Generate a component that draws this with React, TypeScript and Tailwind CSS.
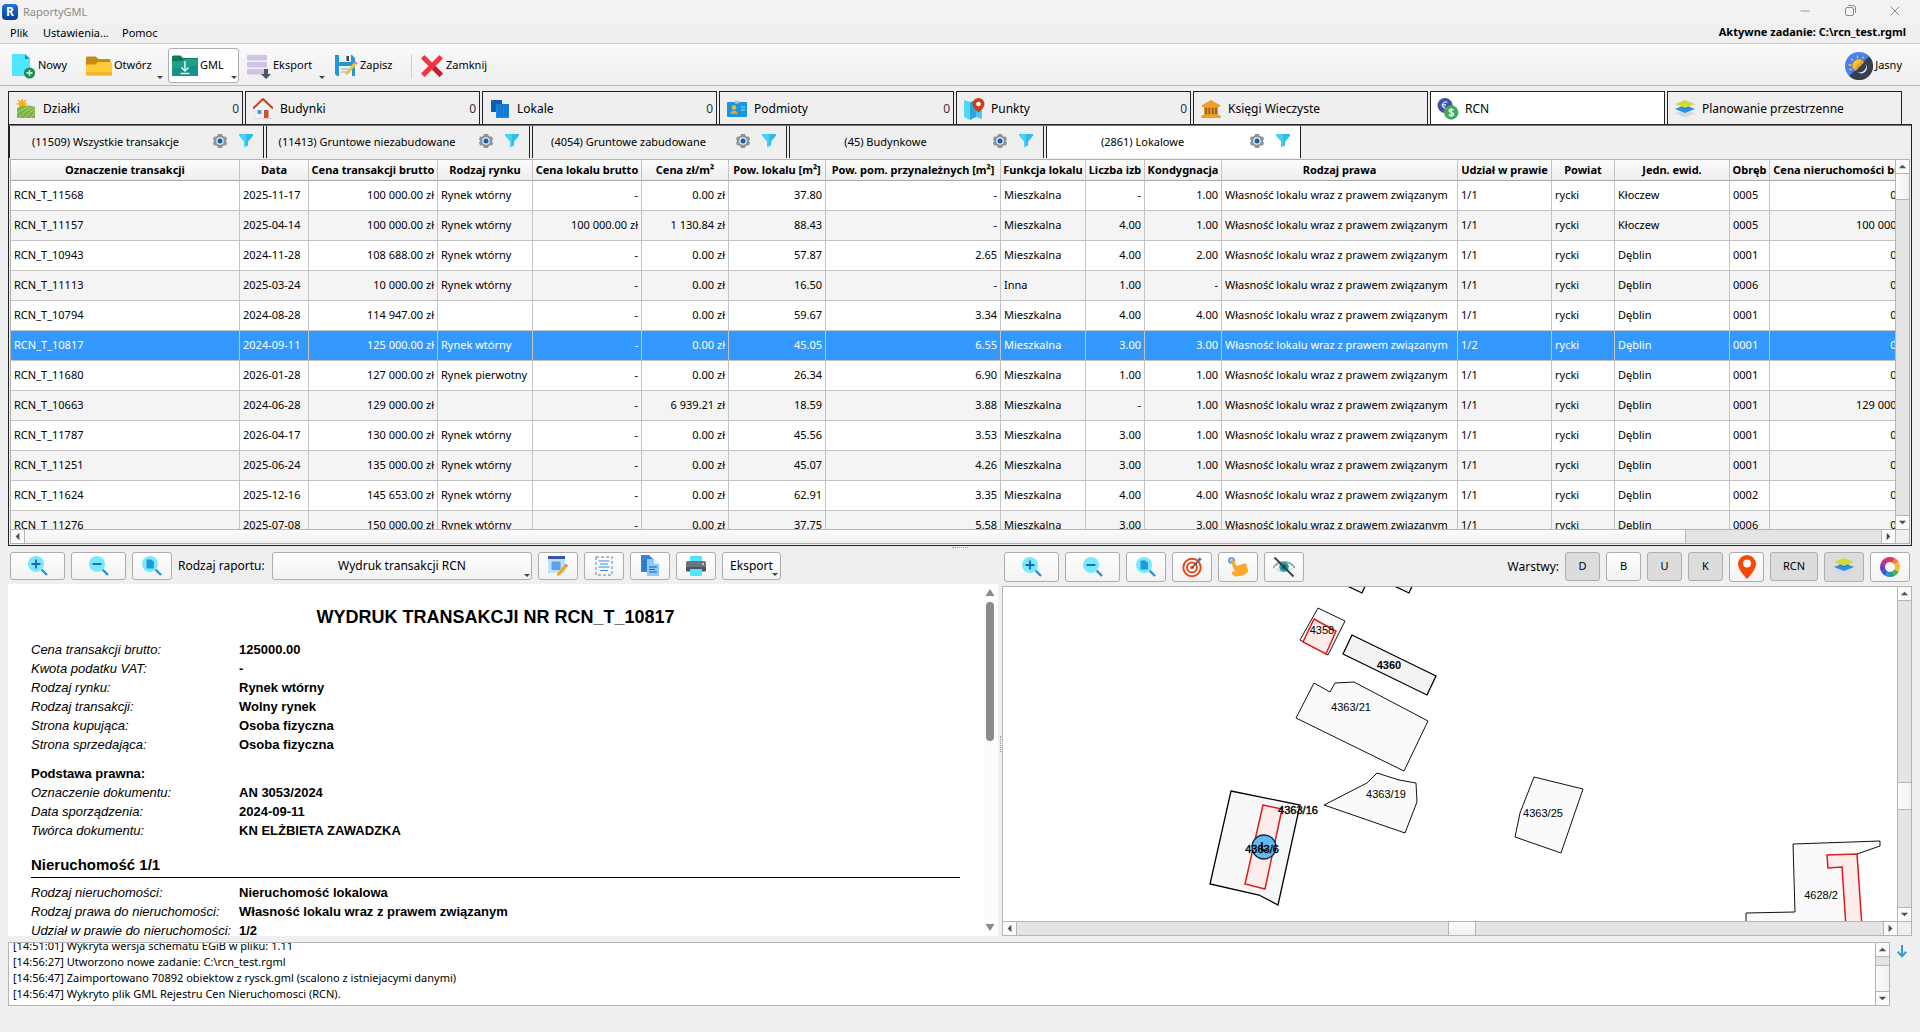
import React, { useState } from 'react'
import { Minus, X } from 'lucide-react'

type IconProps = { className?: string }

/* ---------- ikony paska narzędzi ---------- */

const AppLogo = () => (
  <span className="flex h-4 w-4 items-center justify-center rounded bg-linear-to-b from-[#1f6fe0] to-[#0a3fa0] text-[12px] leading-4 font-bold text-white">
    R
  </span>
)

const NewFileIcon = () => (
  <svg width="24" height="26" viewBox="0 0 24 26">
    <path d="M0 1h13l5 5v17H0z" fill="#50e6ff" />
    <path d="M13 1l5 5h-5z" fill="#1a8fd0" />
    <circle cx="17.500" cy="20" r="5.600" fill="#1a8f5a" />
    <path d="M17.500 17v6M14.500 20h6" stroke="#fff" strokeWidth="1.300" />
  </svg>
)

const FolderIcon = () => (
  <svg width="26" height="22" viewBox="0 0 26 22">
    <path d="M0 3a1.500 1.500 0 0 1 1.500-1.500h8l3 2.500h10.500a1.500 1.500 0 0 1 1.500 1.500V12H0z" fill="#c48a12" />
    <path d="M0 9.500h9l3-2.500h12.500a1.500 1.500 0 0 1 1.500 1.500V19a1.500 1.500 0 0 1-1.500 1.500h-23A1.500 1.500 0 0 1 0 19z" fill="#ffcb3d" />
    <path d="M0 19a1.500 1.500 0 0 0 1.500 1.500h23A1.500 1.500 0 0 0 26 19v-2H0z" fill="#f5b32a" />
  </svg>
)

const ImportFolderIcon = () => (
  <svg width="26" height="22" viewBox="0 0 26 22">
    <path d="M0 2a1.500 1.500 0 0 1 1.500-1.500h7l2.500 2.500H26v8H0z" fill="#0c7a52" />
    <path d="M0 6h10l2-2h14v15.500A1.500 1.500 0 0 1 24.500 21h-23A1.500 1.500 0 0 1 0 19.500z" fill="#1fa187" />
    <path d="M0 14l26-4v9.500a1.500 1.500 0 0 1-1.500 1.500h-23A1.500 1.500 0 0 1 0 19.500z" fill="#178f8a" />
    <path d="M13 6v10M9.500 12.500L13 16l3.500-3.500M8.500 18.500h9" stroke="#e9fff8" strokeWidth="1.400" fill="none" />
  </svg>
)

const ExportIcon = () => (
  <svg width="24" height="26" viewBox="0 0 24 26">
    <g fill="#cfc2e6">
      <rect x="0" y="2" width="20" height="5.500" rx="1" />
      <rect x="0" y="9" width="20" height="5.500" rx="1" />
      <rect x="0" y="16" width="17" height="5.500" rx="1" />
    </g>
    <path d="M17 16h4v5h3l-5 5-5-5h3z" fill="#4a5560" />
  </svg>
)

const SaveIcon = () => (
  <svg width="24" height="24" viewBox="0 0 24 24">
    <path d="M1 1h17l3 3v18H3l-2-2z" fill="#2196d8" />
    <rect x="5" y="1" width="12" height="7" fill="#eef3f6" />
    <rect x="12.500" y="2" width="2.500" height="5" fill="#37474f" />
    <rect x="5" y="12" width="13" height="10" fill="#f2f5f7" />
    <path d="M7 15h8M7 18h5" stroke="#90a4ae" />
    <path d="M12 18l8-9.500 2.500 2-8 9.500-3.200 1z" fill="#f2c438" />
    <path d="M20 8.500l1-1.200 2.500 2-1 1.200z" fill="#e0608a" />
  </svg>
)

const CloseIcon = () => (
  <svg width="24" height="24" viewBox="0 0 24 24">
    <path d="M4.500 1L12 8.500 19.500 1 23 4.500 15.500 12 23 19.500 19.500 23 12 15.500 4.500 23 1 19.500 8.500 12 1 4.500z" fill="#f0353f" />
    <path d="M12 15.500L19.500 23l3.500-3.500L15.500 12z" fill="#c9202f" />
  </svg>
)

const ThemeIcon = () => (
  <svg width="28" height="28" viewBox="0 0 28 28">
    <circle cx="14" cy="14" r="14" fill="#4a7ff0" />
    <path d="M24 4.200A14 14 0 1 1 4.200 24z" fill="#35404c" />
    <path d="M17.500 8.500a6.500 6.500 0 0 0-9 9z" fill="#ffc21a" />
    <path d="M8.500 17.500a6.500 6.500 0 0 0 2 1.500L19 10.500a6.500 6.500 0 0 0-1.500-2z" fill="#f29c1f" />
    <path d="M12.500 3.500v3M6 6.500l2 2M3.500 13h3M18.500 4.500l-1 2M4.500 18l2-1" stroke="#ffc21a" strokeWidth="1.400" />
    <path d="M20.500 12a5.500 5.500 0 1 1-8.500 7.500 6 6 0 0 0 8.500-7.500z" fill="#eef1f4" />
  </svg>
)

/* ---------- ikony zakładek ---------- */

const FieldIcon = () => (
  <svg width="20" height="20" viewBox="0 0 20 20">
    <path d="M6 0v2M.5 5H3M2 1l2 2M10 1L8 3M11.500 5H9" stroke="#ff9800" strokeWidth="1.200" />
    <circle cx="6" cy="5" r="3.300" fill="#ffb300" />
    <path d="M1 9c6-3 12-3 18-1v10a1 1 0 0 1-1 1H2a1 1 0 0 1-1-1z" fill="#7cb342" />
    <path d="M1 14c4-3 8-5 12-6.500M3 19c4-5 8-8 14-11M9 19c3-4 6-7 10-8.500M14 19l5-5" stroke="#aed581" fill="none" />
  </svg>
)

const HouseIcon = () => (
  <svg width="20" height="22" viewBox="0 0 20 22">
    <path d="M3 10l7-7 7 7v10H3z" fill="#f1f3f4" />
    <path d="M0 10.500L10 1l10 9.500" stroke="#c8431f" strokeWidth="2" fill="none" />
    <rect x="4.500" y="12" width="4" height="4" fill="#3ba3dd" />
    <rect x="11" y="12" width="4.500" height="8" fill="#d1502f" />
    <path d="M1 20.500h18" stroke="#d5d9dc" />
  </svg>
)

const UnitsIcon = () => (
  <svg width="20" height="20" viewBox="0 0 20 20">
    <path d="M1 1h11v12H1z" fill="#0f5fb0" />
    <path d="M6 5h13v14H6z" fill="#1a86e0" />
    <path d="M6 5h13v2H6z" fill="#1a78cf" />
    <path d="M9 7v10M12 7v10M15 7v10M17.500 7v10" stroke="#1267bd" />
  </svg>
)

const SubjectIcon = () => (
  <svg width="20" height="20" viewBox="0 0 20 20">
    <rect x="0" y="3" width="20" height="15" rx="1" fill="#1b96de" />
    <path d="M8 1.500h4v3H8z" fill="#b8c4cc" />
    <circle cx="7" cy="8.500" r="2.300" fill="#f4b53f" />
    <path d="M3.500 15a3.500 3.500 0 0 1 7 0z" fill="#f0a020" />
    <path d="M14 8h4M14 11h4" stroke="#8fe0ff" />
  </svg>
)

const MapPointIcon = () => (
  <svg width="22" height="22" viewBox="0 0 22 22">
    <path d="M1 2l6 2v18l-6-3z" fill="#50d8f5" />
    <path d="M7 4l6-2v17l-6 3z" fill="#2ba7dc" />
    <path d="M13 2l6 3v16l-6-2z" fill="#43cdf2" />
    <path d="M15.500 0a6 6 0 0 1 6 6c0 4-6 8.500-6 8.500S9.500 10 9.500 6a6 6 0 0 1 6-6z" fill="#c8401c" />
    <circle cx="15.500" cy="6" r="2.300" fill="#fff" />
  </svg>
)

const BankIcon = () => (
  <svg width="20" height="18" viewBox="0 0 20 18">
    <path d="M10 0l9 5v2H1V5z" fill="#eda02a" />
    <path d="M3 7h14v8H3z" fill="#e8951f" />
    <path d="M5 8v6M8.300 8v6M11.700 8v6M15 8v6" stroke="#7b5a2b" strokeWidth="1.400" />
    <path d="M1 15h18l1 3H0z" fill="#eda02a" />
  </svg>
)

const CoinsIcon = () => (
  <svg width="22" height="22" viewBox="0 0 22 22">
    <circle cx="8" cy="7.500" r="7.500" fill="#3f51a5" />
    <path d="M10.500 4.500a3.200 3.200 0 1 0 0 5.500M4.500 6.500h4.500M4.500 8h4.500" stroke="#cfd6ff" strokeWidth="1.200" fill="none" />
    <circle cx="14.200" cy="14.500" r="7.200" fill="#43a95c" />
    <path d="M16.600 12.300c-.500-1.200-4.500-1.500-4.600.400 0 2 4.800 1.200 4.700 3.400-.200 2-4.300 1.700-4.900.300M14.300 10v9" stroke="#fff" strokeWidth="1.300" fill="none" />
  </svg>
)

const LayersIcon = () => (
  <svg width="20" height="18" viewBox="0 0 20 18">
    <path d="M0 13.500l10-4 10 4-10 4z" fill="#cfdbe4" />
    <path d="M0 9l10-4 10 4-10 4z" fill="#2f8fe6" />
    <path d="M5 7l5-2 5 2-5 2z" fill="#1b74b8" />
    <path d="M0 4l10-4 10 4-10 4z" fill="#cddc39" />
  </svg>
)

const GearIcon = () => (
  <svg width="14" height="14" viewBox="0 0 14 14">
    <path
      d="M5 0h4l.6 1.800 1.600.9L13 2.400l1 3.100L12.700 7 14 8.500l-1 3.100-1.800-.300-1.600.9L9 14H5l-.600-1.800-1.600-.9-1.800.3-1-3.100L1.300 7 0 5.500l1-3.100 1.800.3 1.600-.9z"
      fill="#8b939b"
    />
    <circle cx="7" cy="7" r="3.800" fill="#e4edf4" />
    <circle cx="7" cy="7" r="2.500" fill="#1b5ea8" />
  </svg>
)

const FunnelIcon = () => (
  <svg width="14" height="14" viewBox="0 0 14 14">
    <path d="M0 0h14v1.500L9 7.500v3.500L5 13.500v-6L0 1.500z" fill="#45d0f5" />
    <path d="M7 0h7v1.500L9 7.500v3.500L7 12.500z" fill="#2cbdec" />
  </svg>
)

/* ---------- ikony podglądu i mapy ---------- */

const Magnifier = ({ children }: { children: React.ReactNode }) => (
  <svg width="20" height="20" viewBox="0 0 20 20">
    <path d="M13 13l6 6" stroke="#2b8fd9" strokeWidth="2.400" />
    <circle cx="8" cy="8" r="8" fill="#7ae9fc" />
    {children}
  </svg>
)

const ZoomInIcon = () => (
  <Magnifier>
    <path d="M8 3.500v9M3.500 8h9" stroke="#1666b5" strokeWidth="1.800" />
  </Magnifier>
)

const ZoomOutIcon = () => (
  <Magnifier>
    <path d="M3.500 8h9" stroke="#1666b5" strokeWidth="1.800" />
  </Magnifier>
)

const ZoomPageIcon = () => (
  <Magnifier>
    <path d="M4.500 3.500h5l2.500 2.500v6.500H4.500z" fill="#1f9bdc" />
  </Magnifier>
)

const EditFormIcon = () => (
  <svg width="20" height="20" viewBox="0 0 20 20">
    <rect x="0" y="1" width="17" height="16" fill="#bfe0fb" />
    <rect x="0" y="0" width="17" height="3" fill="#3c50b0" />
    <rect x="3.500" y="5.500" width="9" height="8.500" fill="#5ba2e8" />
    <path d="M9.500 17l7-8 2.500 2-7 8-3 1z" fill="#f7a11b" />
    <path d="M16.500 9l1-1.200 2.500 2-1 1.200z" fill="#d06a5a" />
  </svg>
)

const SelectTextIcon = () => (
  <svg width="18" height="20" viewBox="0 0 18 20">
    <rect x="1" y="1" width="16" height="18" fill="none" stroke="#9aa3ab" strokeWidth="1.400" strokeDasharray="3 2" />
    <path d="M3.500 5h11M5 8h8M3.500 11h11M5 14.500h8" stroke="#2f8fe6" strokeWidth="1.200" />
  </svg>
)

const CopyIcon = () => (
  <svg width="18" height="22" viewBox="0 0 18 22">
    <path d="M0 0h8l4 4v13H0z" fill="#2f86d8" />
    <path d="M6 4h7l5 5v12H6z" fill="#8fc9fb" />
    <path d="M13 4l5 5h-5z" fill="#e3f3ff" />
    <path d="M8 12h8M8 14.500h6M8 17h8M2 7h3M2 10h3M2 13h3" stroke="#1661b0" />
  </svg>
)

const PrinterIcon = () => (
  <svg width="20" height="20" viewBox="0 0 20 20">
    <rect x="4" y="0" width="12" height="6" rx="1" fill="#50e6ff" />
    <rect x="0" y="5" width="20" height="10" rx="1.500" fill="#6a757e" />
    <path d="M0 11h20v3a1.500 1.500 0 0 1-1.500 1.500h-17A1.500 1.500 0 0 1 0 14z" fill="#4b5660" />
    <circle cx="17" cy="8" r="1" fill="#dfe6ea" />
    <rect x="4" y="13" width="12" height="7" rx="1" fill="#50e6ff" />
  </svg>
)

const TargetIcon = () => (
  <svg width="20" height="20" viewBox="0 0 20 20">
    <g fill="none" stroke="#e8481e" strokeWidth="2">
      <circle cx="10" cy="10.500" r="8.700" fill="#fff" />
      <circle cx="10" cy="10.500" r="5" />
    </g>
    <circle cx="10" cy="10.500" r="1.800" fill="#e8481e" />
    <path d="M10 10.500L16 4.500" stroke="#37474f" strokeWidth="1.400" />
    <path d="M15 3l3-3 .500 1.500L20 2l-3 3-2 .500z" fill="#3f7fb0" />
  </svg>
)

const TouchIcon = () => (
  <svg width="20" height="20" viewBox="0 0 20 20">
    <circle cx="3.500" cy="3.500" r="3.300" fill="#4a94dc" />
    <circle cx="3.500" cy="3.500" r="1.700" fill="#cfe6fa" />
    <path d="M3 3.500c.8-.8 2-.500 2.700.500l3.300 5 7-2.500c1.500-.500 2.300.500 2.700 2l1.300 5c.2 1-.2 2-1 2.500l-4 2.500-6 1c-1.500.2-3-.300-4-1.500l-1.500-2c.500-1.500 2-2 3.500-1.500L3 5.500c-.3-.700-.400-1.500 0-2z" fill="#fba92c" />
  </svg>
)

const HiddenIcon = () => (
  <svg width="22" height="20" viewBox="0 0 22 20">
    <path d="M0 11C5 3 17 3 22 11" stroke="#9aa9b8" strokeWidth="1.800" fill="none" />
    <path d="M3 11.500c5 4.500 11 4.500 16 0" stroke="#cfd8e0" strokeWidth="1.300" fill="none" />
    <circle cx="11" cy="10" r="4.800" fill="#13a0a8" />
    <circle cx="11" cy="10" r="2" fill="#0b3f48" />
    <path d="M1.500.500L20.500 19.500" stroke="#37424e" strokeWidth="2" />
  </svg>
)

const PinIcon = () => (
  <svg width="18" height="24" viewBox="0 0 18 24">
    <path d="M9 0a9 9 0 0 1 9 9c0 6-9 15-9 15S0 15 0 9a9 9 0 0 1 9-9z" fill="#fd4605" />
    <circle cx="9" cy="8.500" r="4" fill="#fff" />
  </svg>
)

const wheel = ['#e53950', '#f5793b', '#fbb829', '#f2c12e', '#4caf50', '#27a08c', '#2196d8', '#3556c8', '#5b3fc0', '#8e35b8', '#c02f8a', '#d83560']

const ColorWheelIcon = () => (
  <svg width="20" height="20" viewBox="-10 -10 20 20">
    {wheel.map((color, i) => (
      <path key={color} d="M0-7.500A7.500 7.500 0 0 1 3.750-6.500" transform={`rotate(${i * 30})`} stroke={color} strokeWidth="5" fill="none" />
    ))}
  </svg>
)

/* ---------- wspólne elementy ---------- */

const MenuArrow = ({ className = '' }: IconProps) => (
  <svg width="6" height="3" viewBox="0 0 6 3" className={`pointer-events-none absolute ${className}`}>
    <path d="M0 0h6L3 3z" fill="#444" />
  </svg>
)

const arrowPaths = {
  up: 'M3 9h8L7 5z',
  down: 'M3 5h8L7 9z',
  left: 'M9 3v8L5 7z',
  right: 'M5 3v8l4-4z'
}

const ScrollButton = ({ dir, label }: { dir: keyof typeof arrowPaths; label: string }) => (
  <button type="button" aria-label={label} className="flex h-[13px] w-[13px] shrink-0 items-center justify-center bg-[#fafafa]">
    <svg width="13" height="13" viewBox="0 0 14 14">
      <path d={arrowPaths[dir]} fill="#505050" />
    </svg>
  </button>
)

interface ScrollProps {
  before?: string
  thumb: string
  after?: string
}

const VScroll = ({ before = '', thumb, after = '' }: ScrollProps) => (
  <div className="flex w-[14px] shrink-0 flex-col border-l border-[#b5b5b5] bg-[#e4e4e4]">
    <ScrollButton dir="up" label="Przewiń w górę" />
    <div className="flex min-h-0 flex-1 flex-col border-y border-[#b5b5b5]">
      <div className={before} />
      <div className={`shrink-0 border-[#b5b5b5] bg-linear-to-r from-[#fcfcfc] to-[#f0f0f0] ${thumb}`} />
      <div className={after} />
    </div>
    <ScrollButton dir="down" label="Przewiń w dół" />
  </div>
)

const HScroll = ({ before = '', thumb, after = '' }: ScrollProps) => (
  <div className="flex h-[14px] shrink-0 border-t border-[#b5b5b5] bg-[#e4e4e4]">
    <ScrollButton dir="left" label="Przewiń w lewo" />
    <div className="flex min-w-0 flex-1 border-x border-[#b5b5b5]">
      <div className={before} />
      <div className={`shrink-0 border-[#b5b5b5] bg-linear-to-b from-[#fcfcfc] to-[#f0f0f0] ${thumb}`} />
      <div className={after} />
    </div>
    <ScrollButton dir="right" label="Przewiń w prawo" />
    <div className="w-[14px] shrink-0 border-l border-[#b5b5b5] bg-[#efefef]" />
  </div>
)

interface PushButtonProps {
  label: string
  size: string
  pressed?: boolean
  children: React.ReactNode
}

const PushButton = ({ label, size, pressed, children }: PushButtonProps) => (
  <button
    type="button"
    aria-label={label}
    title={label}
    aria-pressed={pressed}
    className={`relative flex shrink-0 items-center justify-center rounded-[3px] border border-[#adadad] ${size} ${
      pressed ? 'bg-[#dcdcdc]' : 'bg-linear-to-b from-white to-[#f2f2f2]'
    }`}
  >
    {children}
  </button>
)

/* ---------- dane ---------- */

const mainTabs = [
  { label: 'Działki', count: '0', icon: <FieldIcon /> },
  { label: 'Budynki', count: '0', icon: <HouseIcon /> },
  { label: 'Lokale', count: '0', icon: <UnitsIcon /> },
  { label: 'Podmioty', count: '0', icon: <SubjectIcon /> },
  { label: 'Punkty', count: '0', icon: <MapPointIcon /> },
  { label: 'Księgi Wieczyste', icon: <BankIcon /> },
  { label: 'RCN', icon: <CoinsIcon /> },
  { label: 'Planowanie przestrzenne', icon: <LayersIcon /> }
]

const subTabs = [
  { label: '(11509) Wszystkie transakcje', width: 'w-[255px]' },
  { label: '(11413) Gruntowe niezabudowane', width: 'w-[264px]' },
  { label: '(4054) Gruntowe zabudowane', width: 'w-[255px]' },
  { label: '(45) Budynkowe', width: 'w-[255px]' },
  { label: '(2861) Lokalowe', width: 'w-[255px]' }
]

const columns = [
  { title: 'Oznaczenie transakcji', width: 'w-[229px]' },
  { title: 'Data', width: 'w-[69px]' },
  { title: 'Cena transakcji brutto', width: 'w-[129px]', right: true },
  { title: 'Rodzaj rynku', width: 'w-[95px]' },
  { title: 'Cena lokalu brutto', width: 'w-[109px]', right: true },
  { title: 'Cena zł/m²', width: 'w-[87px]', right: true },
  { title: 'Pow. lokalu [m²]', width: 'w-[97px]', right: true },
  { title: 'Pow. pom. przynależnych [m²]', width: 'w-[175px]', right: true },
  { title: 'Funkcja lokalu', width: 'w-[85px]' },
  { title: 'Liczba izb', width: 'w-[59px]', right: true },
  { title: 'Kondygnacja', width: 'w-[77px]', right: true },
  { title: 'Rodzaj prawa', width: 'w-[236px]' },
  { title: 'Udział w prawie', width: 'w-[94px]' },
  { title: 'Powiat', width: 'w-[63px]' },
  { title: 'Jedn. ewid.', width: 'w-[115px]' },
  { title: 'Obręb', width: 'w-[40px]' },
  { title: 'Cena nieruchomości brutto', width: 'w-[157px]', right: true }
]

const prawo = 'Własność lokalu wraz z prawem związanym'

const rows = [
  ['RCN_T_11568', '2025-11-17', '100 000.00 zł', 'Rynek wtórny', '-', '0.00 zł', '37.80', '-', 'Mieszkalna', '-', '1.00', prawo, '1/1', 'rycki', 'Kłoczew', '0005', '0.00 zł'],
  ['RCN_T_11157', '2025-04-14', '100 000.00 zł', 'Rynek wtórny', '100 000.00 zł', '1 130.84 zł', '88.43', '-', 'Mieszkalna', '4.00', '1.00', prawo, '1/1', 'rycki', 'Kłoczew', '0005', '100 000.00 zł'],
  ['RCN_T_10943', '2024-11-28', '108 688.00 zł', 'Rynek wtórny', '-', '0.00 zł', '57.87', '2.65', 'Mieszkalna', '4.00', '2.00', prawo, '1/1', 'rycki', 'Dęblin', '0001', '0.00 zł'],
  ['RCN_T_11113', '2025-03-24', '10 000.00 zł', 'Rynek wtórny', '-', '0.00 zł', '16.50', '-', 'Inna', '1.00', '-', prawo, '1/1', 'rycki', 'Dęblin', '0006', '0.00 zł'],
  ['RCN_T_10794', '2024-08-28', '114 947.00 zł', '', '-', '0.00 zł', '59.67', '3.34', 'Mieszkalna', '4.00', '4.00', prawo, '1/1', 'rycki', 'Dęblin', '0001', '0.00 zł'],
  ['RCN_T_10817', '2024-09-11', '125 000.00 zł', 'Rynek wtórny', '-', '0.00 zł', '45.05', '6.55', 'Mieszkalna', '3.00', '3.00', prawo, '1/2', 'rycki', 'Dęblin', '0001', '0.00 zł'],
  ['RCN_T_11680', '2026-01-28', '127 000.00 zł', 'Rynek pierwotny', '-', '0.00 zł', '26.34', '6.90', 'Mieszkalna', '1.00', '1.00', prawo, '1/1', 'rycki', 'Dęblin', '0001', '0.00 zł'],
  ['RCN_T_10663', '2024-06-28', '129 000.00 zł', '', '-', '6 939.21 zł', '18.59', '3.88', 'Mieszkalna', '-', '1.00', prawo, '1/1', 'rycki', 'Dęblin', '0001', '129 000.00 zł'],
  ['RCN_T_11787', '2026-04-17', '130 000.00 zł', 'Rynek wtórny', '-', '0.00 zł', '45.56', '3.53', 'Mieszkalna', '3.00', '1.00', prawo, '1/1', 'rycki', 'Dęblin', '0001', '0.00 zł'],
  ['RCN_T_11251', '2025-06-24', '135 000.00 zł', 'Rynek wtórny', '-', '0.00 zł', '45.07', '4.26', 'Mieszkalna', '3.00', '1.00', prawo, '1/1', 'rycki', 'Dęblin', '0001', '0.00 zł'],
  ['RCN_T_11624', '2025-12-16', '145 653.00 zł', 'Rynek wtórny', '-', '0.00 zł', '62.91', '3.35', 'Mieszkalna', '4.00', '4.00', prawo, '1/1', 'rycki', 'Dęblin', '0002', '0.00 zł'],
  ['RCN_T_11276', '2025-07-08', '150 000.00 zł', 'Rynek wtórny', '-', '0.00 zł', '37.75', '5.58', 'Mieszkalna', '3.00', '3.00', prawo, '1/1', 'rycki', 'Dęblin', '0006', '0.00 zł']
]

const transactionInfo = [
  ['Cena transakcji brutto:', '125000.00'],
  ['Kwota podatku VAT:', '-'],
  ['Rodzaj rynku:', 'Rynek wtórny'],
  ['Rodzaj transakcji:', 'Wolny rynek'],
  ['Strona kupująca:', 'Osoba fizyczna'],
  ['Strona sprzedająca:', 'Osoba fizyczna']
]

const legalInfo = [
  ['Oznaczenie dokumentu:', 'AN 3053/2024'],
  ['Data sporządzenia:', '2024-09-11'],
  ['Twórca dokumentu:', 'KN ELŻBIETA ZAWADZKA']
]

const propertyInfo = [
  ['Rodzaj nieruchomości:', 'Nieruchomość lokalowa'],
  ['Rodzaj prawa do nieruchomości:', prawo],
  ['Udział w prawie do nieruchomości:', '1/2']
]

const logLines = [
  '[14:51:01] Wykryta wersja schematu EGiB w pliku: 1.11',
  '[14:56:27] Utworzono nowe zadanie: C:\\rcn_test.rgml',
  '[14:56:47] Zaimportowano 70892 obiektow z rysck.gml (scalono z istniejacymi danymi)',
  '[14:56:47] Wykryto plik GML Rejestru Cen Nieruchomosci (RCN).'
]

/* ---------- sekcje okna ---------- */

const TitleBar = () => (
  <header className="flex h-6 shrink-0 items-center bg-[#f3f3f3] pl-[2px]">
    <AppLogo />
    <span className="ml-[5px] text-[11px] text-[#8a8a8a]">RaportyGML</span>
    <div className="ml-auto flex items-center gap-[29px] pr-[17px] pb-[3px] text-[#8a8a8a]">
      <button type="button" aria-label="Minimalizuj" className="flex h-4 w-4 items-center justify-center">
        <Minus size={14} strokeWidth={1.500} />
      </button>
      <button type="button" aria-label="Przywróć" className="flex h-4 w-4 items-center justify-center">
        <svg width="11" height="11" viewBox="0 0 11 11" fill="none" stroke="#8a8a8a">
          <rect x="0.500" y="2.500" width="8" height="8" rx="1.500" />
          <path d="M3 .5h5a2.500 2.500 0 0 1 2.500 2.500v5" />
        </svg>
      </button>
      <button type="button" aria-label="Zamknij okno" className="flex h-4 w-4 items-center justify-center">
        <X size={16} strokeWidth={1.500} />
      </button>
    </div>
  </header>
)

const MenuBar = () => (
  <nav className="flex h-5 shrink-0 items-center border-b border-[#cfcfcf] pr-[14px] pl-[10px] text-[11px]">
    <button type="button" className="w-[33px] text-left">Plik</button>
    <button type="button" className="w-[79px] text-left">Ustawienia...</button>
    <button type="button" className="text-left">Pomoc</button>
    <span className="ml-auto pb-[2px] font-bold">Aktywne zadanie: C:\rcn_test.rgml</span>
  </nav>
)

const toolButton = 'relative flex h-[35px] items-center gap-[2px] rounded-[3px] border px-[3px] text-[11px]'

const Toolbar = () => (
  <div className="flex h-[42px] shrink-0 items-center border-b border-[#b9b9b9] bg-linear-to-b from-[#fafafa] to-[#efefef] pt-[2px] pr-[18px] pl-2">
    <button type="button" className={`${toolButton} w-[74px] border-transparent`}>
      <NewFileIcon />
      Nowy
    </button>
    <button type="button" className={`${toolButton} w-[86px] border-transparent`}>
      <FolderIcon />
      Otwórz
      <MenuArrow className="right-1 bottom-[3px]" />
    </button>
    <button type="button" className={`${toolButton} mr-1 w-[71px] border-[#adadad] bg-white`}>
      <ImportFolderIcon />
      GML
      <MenuArrow className="right-[1px] bottom-[3px]" />
    </button>
    <button type="button" className={`${toolButton} w-[87px] border-transparent`}>
      <ExportIcon />
      Eksport
      <MenuArrow className="right-1 bottom-[3px]" />
    </button>
    <button type="button" className={`${toolButton} w-[77px] border-transparent`}>
      <SaveIcon />
      Zapisz
    </button>
    <div className="mx-1 h-6 w-px bg-[#cfcfcf]" />
    <button type="button" className={`${toolButton} w-[80px] border-transparent`}>
      <CloseIcon />
      Zamknij
    </button>
    <button type="button" className="ml-auto flex items-center gap-[2px] text-[11px]">
      <ThemeIcon />
      Jasny
    </button>
  </div>
)

const MainTabs = ({ active, onSelect }: { active: string; onSelect: (tab: string) => void }) => (
  <div role="tablist" className="flex shrink-0 gap-[2px]">
    {mainTabs.map(tab => (
      <button
        key={tab.label}
        type="button"
        role="tab"
        aria-selected={tab.label === active}
        onClick={() => onSelect(tab.label)}
        className={`flex h-[33px] w-[235px] items-center border border-b-0 border-[#222] pt-[2px] pr-[3px] pl-[6px] text-[12px] ${
          tab.label === active ? 'bg-white' : ''
        }`}
      >
        <span className="flex w-[22px] justify-center">{tab.icon}</span>
        <span className="ml-[6px]">{tab.label}</span>
        <span className="ml-auto text-[#333]">{tab.count}</span>
      </button>
    ))}
  </div>
)

const SubTabs = ({ active, onSelect }: { active: string; onSelect: (tab: string) => void }) => (
  <div role="tablist" className="flex h-[34px] shrink-0 gap-[2px] border-t border-[#777]">
    {subTabs.map(tab => (
      <div
        key={tab.label}
        className={`flex h-8 shrink-0 items-center border-x border-[#222] pr-[10px] ${tab.width} ${
          tab.label === active ? 'bg-white' : ''
        }`}
      >
        <button
          type="button"
          role="tab"
          aria-selected={tab.label === active}
          onClick={() => onSelect(tab.label)}
          className="h-full flex-1 pt-px pr-3 text-[11px]"
        >
          {tab.label}
        </button>
        <button type="button" aria-label={`Ustawienia: ${tab.label}`} className="mr-3 pb-[2px]">
          <GearIcon />
        </button>
        <button type="button" aria-label={`Filtr: ${tab.label}`} className="pb-[2px]">
          <FunnelIcon />
        </button>
      </div>
    ))}
  </div>
)

const TransactionsTable = ({ selected, onSelect }: { selected: string; onSelect: (id: string) => void }) => (
  <div className="mx-[1px] mb-[1px] flex min-h-0 flex-1 flex-col border border-[#b0b0b0] bg-[#efefef]">
    <div className="flex min-h-0 flex-1">
      <div className="min-w-0 flex-1 overflow-hidden bg-white">
        <table className="w-[1916px] table-fixed border-separate border-spacing-0 text-[11px]">
          <thead>
            <tr className="h-[21px] bg-linear-to-b from-[#fdfdfd] to-[#ececec]">
              {columns.map(col => (
                <th
                  key={col.title}
                  scope="col"
                  className={`border-r border-b border-r-[#c4c4c4] border-b-[#a8a8a8] p-0 text-center leading-5 font-bold whitespace-nowrap ${col.width}`}
                >
                  {col.title}
                </th>
              ))}
            </tr>
          </thead>
          <tbody>
            {rows.map((row, i) => {
              const isSelected = row[0] === selected
              return (
                <tr
                  key={row[0]}
                  onClick={() => onSelect(row[0])}
                  className={`h-[30px] ${isSelected ? 'bg-[#3399ff] text-white' : i % 2 ? 'bg-[#f4f4f4]' : 'bg-white'}`}
                >
                  {row.map((value, j) => (
                    <td
                      key={columns[j].title}
                      className={`border-r border-b border-[#c4c4c4] px-[3px] pt-0 pb-px whitespace-nowrap ${
                        columns[j].right ? 'text-right' : 'text-left'
                      }`}
                    >
                      {value}
                    </td>
                  ))}
                </tr>
              )
            })}
          </tbody>
        </table>
      </div>
      <VScroll thumb="h-[26px] border-b" />
    </div>
    <HScroll thumb="w-[89.5%] border-r" />
  </div>
)

const ReportRows = ({ items }: { items: string[][] }) => (
  <dl className="grid grid-cols-[207px_1fr] leading-[19px]">
    {items.map(([name, value]) => (
      <React.Fragment key={name}>
        <dt className="whitespace-nowrap italic">{name}</dt>
        <dd className="pl-[1px] font-bold">{value}</dd>
      </React.Fragment>
    ))}
  </dl>
)

const ReportPane = () => (
  <section className="flex min-w-0 flex-[990] flex-col">
    <div className="flex h-8 shrink-0 items-start gap-[6px] pl-[2px] text-[12px]">
      <PushButton label="Powiększ" size="h-7 w-[55px]"><ZoomInIcon /></PushButton>
      <PushButton label="Pomniejsz" size="h-7 w-[55px]"><ZoomOutIcon /></PushButton>
      <PushButton label="Dopasuj stronę" size="h-7 w-[40px]"><ZoomPageIcon /></PushButton>
      <label htmlFor="report-type" className="flex h-7 w-[88px] items-center whitespace-nowrap">Rodzaj raportu:</label>
      <div className="relative">
        <select
          id="report-type"
          className="h-7 w-[260px] appearance-none rounded-[3px] border border-[#adadad] bg-linear-to-b from-white to-[#f2f2f2] text-center"
        >
          <option>Wydruk transakcji RCN</option>
        </select>
        <MenuArrow className="right-[2px] bottom-[3px]" />
      </div>
      <PushButton label="Edytuj szablon" size="h-7 w-[40px]"><EditFormIcon /></PushButton>
      <PushButton label="Zaznacz wszystko" size="h-7 w-[40px]"><SelectTextIcon /></PushButton>
      <PushButton label="Kopiuj" size="h-7 w-[40px]"><CopyIcon /></PushButton>
      <PushButton label="Drukuj" size="h-7 w-[40px]"><PrinterIcon /></PushButton>
      <PushButton label="Eksport" size="h-7 w-[59px]">
        Eksport
        <MenuArrow className="right-[2px] bottom-[3px]" />
      </PushButton>
    </div>
    <div className="flex min-h-0 flex-1 bg-white">
      <article className="min-w-0 flex-1 overflow-hidden px-[23px] pt-5 font-['Liberation_Sans',Arial,sans-serif] text-[13px]">
        <h1 className="mb-[10px] text-center text-[18px] leading-[26px] font-bold">WYDRUK TRANSAKCJI NR RCN_T_10817</h1>
        <ReportRows items={transactionInfo} />
        <h2 className="mt-[10px] leading-[19px] font-bold">Podstawa prawna:</h2>
        <ReportRows items={legalInfo} />
        <h2 className="mt-[14px] mb-[5px] border-b border-black pb-[2px] text-[15px] leading-[21px] font-bold">Nieruchomość 1/1</h2>
        <ReportRows items={propertyInfo} />
      </article>
      <div className="flex w-[15px] shrink-0 flex-col items-center bg-[#fcfcfc] py-[5px] pr-px">
        <svg width="10" height="8" viewBox="0 0 10 8">
          <path d="M5 0l4.500 7H.5z" fill="#8b8b8b" />
        </svg>
        <div className="my-[5px] flex min-h-0 flex-1 flex-col">
          <div className="h-[44%] w-2 rounded-full bg-[#8b8b8b]" />
        </div>
        <svg width="10" height="8" viewBox="0 0 10 8">
          <path d="M5 8L.5 1h9z" fill="#8b8b8b" />
        </svg>
      </div>
    </div>
  </section>
)

const MapCanvas = () => (
  <svg width="100%" height="100%" className="block bg-white font-['Liberation_Sans',Arial,sans-serif] text-[11px]">
    <g fill="#f3f3f3" stroke="#000" strokeWidth="1.300">
      <path d="M340-3L359 6l4-9zM387-3l19 9 4-9z" />
      <path d="M349 48l84 41-9 19-84-41z" />
    </g>
    <g fill="#fafafa" stroke="#111" strokeWidth="1">
      <path d="M315 21l27 13-17 34-28-15z" />
      <path d="M311 96l16 9 5-9 19-1 74 39-24 50-108-53z" />
      <path d="M321 218l43-22 10-10 22 7 17 3 1 19-12 31z" />
      <path d="M531 190l49 12-22 64-46-16 5-24z" />
      <path d="M743 340v-14l49-1-2-68 87-3v5l-23 8 4 73z" />
    </g>
    <path d="M228 204l69 14-22 100-19-10-49-11z" fill="#f7f7f7" stroke="#000" strokeWidth="1.300" />
    <g fill="#fdecec" stroke="#e01b1b" strokeWidth="1.500">
      <path d="M311 32l22 12-10 23-23-12z" />
      <path d="M260 218l19 4-17 80-20-5z" />
      <path d="M824 268l30-1 5 73h-16l-4-60-14 1z" />
    </g>
    <circle cx="261" cy="260" r="12" fill="#62b8f5" stroke="#10222e" strokeWidth="1.300" />
    <g textAnchor="middle">
      <text x="319" y="47">4358</text>
      <text x="386" y="82" fontWeight="bold">4360</text>
      <text x="348" y="124">4363/21</text>
      <text x="383" y="211">4363/19</text>
      <text x="540" y="230">4363/25</text>
      <text x="295" y="227" stroke="#000" strokeWidth="0.400">4363/16</text>
      <text x="261" y="264" fontSize="12" fontWeight="bold">L</text>
      <text x="259" y="266" stroke="#000" strokeWidth="0.400">4363/6</text>
      <text x="818" y="312">4628/2</text>
    </g>
  </svg>
)

const MapPane = () => {
  const [layers, setLayers] = useState({ D: true, B: false, U: true, K: true })

  return (
    <section className="flex min-w-0 flex-[910] flex-col">
      <div className="flex h-[34px] shrink-0 items-start gap-[6px] pr-[2px] pl-[2px] text-[12px]">
        <PushButton label="Powiększ mapę" size="h-[30px] w-[55px]"><ZoomInIcon /></PushButton>
        <PushButton label="Pomniejsz mapę" size="h-[30px] w-[55px]"><ZoomOutIcon /></PushButton>
        <PushButton label="Cały zakres" size="h-[30px] w-[40px]"><ZoomPageIcon /></PushButton>
        <PushButton label="Centruj" size="h-[30px] w-[40px]"><TargetIcon /></PushButton>
        <PushButton label="Wskaż obiekt" size="h-[30px] w-[40px]"><TouchIcon /></PushButton>
        <PushButton label="Ukryj" size="h-[30px] w-[40px]"><HiddenIcon /></PushButton>
        <span className="ml-auto flex h-[30px] items-center">Warstwy:</span>
        {(Object.keys(layers) as (keyof typeof layers)[]).map(key => (
          <button
            key={key}
            type="button"
            aria-pressed={layers[key]}
            onClick={() => setLayers(prev => ({ ...prev, [key]: !prev[key] }))}
            className={`h-[29px] w-[35px] shrink-0 rounded-[3px] border border-[#adadad] text-[11px] ${
              layers[key] ? 'bg-[#dcdcdc]' : 'bg-linear-to-b from-white to-[#f2f2f2]'
            }`}
          >
            {key}
          </button>
        ))}
        <PushButton label="Punkty adresowe" size="h-[30px] w-[35px]"><PinIcon /></PushButton>
        <PushButton label="RCN" size="h-[29px] w-[48px] text-[11px]" pressed>RCN</PushButton>
        <PushButton label="Podkład" size="h-[30px] w-[40px]" pressed><LayersIcon /></PushButton>
        <PushButton label="Kolory" size="h-[30px] w-[40px]"><ColorWheelIcon /></PushButton>
      </div>
      <div className="flex min-h-0 flex-1 flex-col border border-[#b5b5b5]">
        <div className="flex min-h-0 flex-1">
          <div className="min-w-0 flex-1 overflow-hidden">
            <MapCanvas />
          </div>
          <VScroll before="flex-[181]" thumb="h-7 border-y" after="flex-[97]" />
        </div>
        <HScroll before="flex-[430]" thumb="w-7 border-x" after="flex-[407]" />
      </div>
    </section>
  )
}

const LogPanel = () => (
  <footer className="mt-[6px] mb-[26px] flex h-16 shrink-0 pr-3 pl-2">
    <div className="flex min-w-0 flex-1 border border-[#b5b5b5] bg-white">
      <div role="log" className="flex min-w-0 flex-1 flex-col justify-end overflow-hidden pb-[3px] pl-1 text-[11px] leading-4">
        {logLines.map(line => (
          <p key={line} className="shrink-0">{line}</p>
        ))}
      </div>
      <VScroll before="flex-1" thumb="h-[26px] border-t" />
    </div>
    <button type="button" aria-label="Przewiń na koniec" className="flex w-[17px] items-start justify-end pt-[3px]">
      <svg width="10" height="13" viewBox="0 0 10 13">
        <path d="M5 0v11M.800 6.800L5 11.200l4.200-4.400" stroke="#2b9fd9" strokeWidth="2" fill="none" />
      </svg>
    </button>
    <div className="w-px" />
  </footer>
)

export const App: React.FC = () => {
  const [mainTab, setMainTab] = useState('RCN')
  const [subTab, setSubTab] = useState('(2861) Lokalowe')
  const [selected, setSelected] = useState('RCN_T_10817')

  return (
    <div className="flex h-screen flex-col overflow-hidden bg-[#efefef] font-['Noto_Sans','Segoe_UI',sans-serif] text-black">
      <TitleBar />
      <MenuBar />
      <Toolbar />

      <main className="flex min-h-0 flex-1 flex-col px-2 pt-[5px]">
        <MainTabs active={mainTab} onSelect={setMainTab} />
        <div className="flex min-h-0 flex-[420] flex-col border border-[#222]">
          <SubTabs active={subTab} onSelect={setSubTab} />
          <TransactionsTable selected={selected} onSelect={setSelected} />
        </div>
        <div className="flex h-[6px] shrink-0 justify-center">
          <div className="mt-px h-px w-4 border-t border-dotted border-[#999]" />
        </div>
        <div className="flex min-h-0 flex-[384]">
          <ReportPane />
          <div className="flex w-1 shrink-0 items-center justify-center">
            <div className="h-4 border-l border-dotted border-[#999]" />
          </div>
          <MapPane />
        </div>
      </main>

      <LogPanel />
    </div>
  )
}

export default App
